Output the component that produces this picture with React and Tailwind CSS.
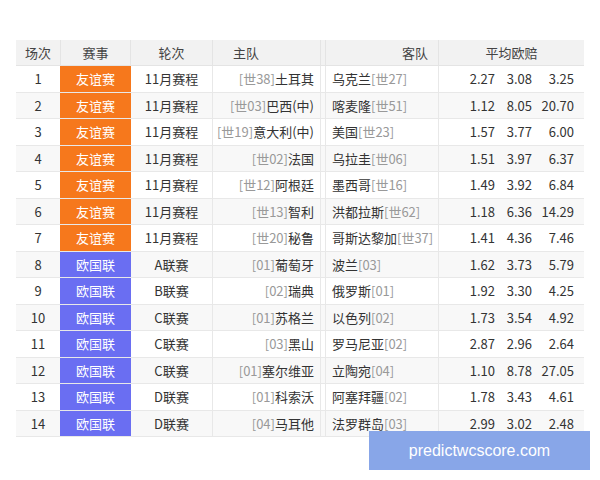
import React from "react";

const rows = [
  [1, "友谊赛", "11月赛程", "[世38]", "土耳其", "", "乌克兰", "[世27]", "2.27", "3.08", "3.25"],
  [2, "友谊赛", "11月赛程", "[世03]", "巴西", "(中)", "喀麦隆", "[世51]", "1.12", "8.05", "20.70"],
  [3, "友谊赛", "11月赛程", "[世19]", "意大利", "(中)", "美国", "[世23]", "1.57", "3.77", "6.00"],
  [4, "友谊赛", "11月赛程", "[世02]", "法国", "", "乌拉圭", "[世06]", "1.51", "3.97", "6.37"],
  [5, "友谊赛", "11月赛程", "[世12]", "阿根廷", "", "墨西哥", "[世16]", "1.49", "3.92", "6.84"],
  [6, "友谊赛", "11月赛程", "[世13]", "智利", "", "洪都拉斯", "[世62]", "1.18", "6.36", "14.29"],
  [7, "友谊赛", "11月赛程", "[世20]", "秘鲁", "", "哥斯达黎加", "[世37]", "1.41", "4.36", "7.46"],
  [8, "欧国联", "A联赛", "[01]", "葡萄牙", "", "波兰", "[03]", "1.62", "3.73", "5.79"],
  [9, "欧国联", "B联赛", "[02]", "瑞典", "", "俄罗斯", "[01]", "1.92", "3.30", "4.25"],
  [10, "欧国联", "C联赛", "[01]", "苏格兰", "", "以色列", "[02]", "1.73", "3.54", "4.92"],
  [11, "欧国联", "C联赛", "[03]", "黑山", "", "罗马尼亚", "[02]", "2.87", "2.96", "2.64"],
  [12, "欧国联", "C联赛", "[01]", "塞尔维亚", "", "立陶宛", "[04]", "1.10", "8.78", "27.05"],
  [13, "欧国联", "D联赛", "[01]", "科索沃", "", "阿塞拜疆", "[02]", "1.78", "3.43", "4.61"],
  [14, "欧国联", "D联赛", "[04]", "马耳他", "", "法罗群岛", "[03]", "2.99", "3.02", "2.48"],
];

export default function App() {
  return (
    <div
      className="w-[600px] h-[480px] bg-white relative pt-[40px] pl-[16px] text-[13px] text-[#333]"
      style={{ fontFamily: '"Microsoft YaHei", "Noto Sans CJK SC", sans-serif' }}
    >
      <div className="w-[568px] flex flex-col">
        <div className="flex h-[26px] items-center bg-[#f2f2f2] text-[#444] border-b border-[#e4e4e4]">
          <div className="w-[44px] text-center">场次</div>
          <div className="w-[71px] text-center h-full flex items-center justify-center border-x border-[#e4e4e4]">赛事</div>
          <div className="w-[81px] text-center">轮次</div>
          <div className="w-[108px] h-full flex items-center pl-[20px] border-l border-[#e4e4e4]">主队</div>
          <div className="w-[6px] h-full border-x border-[#e4e4e4]" />
          <div className="w-[112px] text-right pr-[10px]">客队</div>
          <div className="w-[146px] h-full flex items-center justify-center border-l border-[#e4e4e4]">平均欧赔</div>
        </div>
        {rows.map((r, i) => (
          <div
            key={r[0]}
            className={
              "flex h-[26.5px] items-center border-b border-[#e8e8e8] " +
              (i % 2 ? "bg-[#f8f8f8]" : "bg-white")
            }
          >
            <div className="w-[44px] text-center">{r[0]}</div>
            <div
              className={
                "w-[71px] h-full flex items-center justify-center text-white " +
                (r[0] <= 7 ? "bg-[#f6781c]" : "bg-[#6a6ef2]")
              }
            >
              {r[1]}
            </div>
            <div className="w-[81px] text-center">{r[2]}</div>
            <div className="w-[108px] h-full flex items-center justify-end pr-[6px] border-l border-[#e8e8e8] whitespace-nowrap">
              <span className="text-[#999]">{r[3]}</span>
              {r[4]}
              {r[5]}
            </div>
            <div className="w-[6px] h-full border-x border-[#e8e8e8]" />
            <div className="w-[112px] pl-[6px] whitespace-nowrap">
              {r[6]}
              <span className="text-[#999]">{r[7]}</span>
            </div>
            <div className="w-[146px] h-full flex items-center border-l border-[#e8e8e8]">
              <span className="w-[56px] text-right">{r[8]}</span>
              <span className="w-[37px] text-right">{r[9]}</span>
              <span className="w-[42px] text-right">{r[10]}</span>
            </div>
          </div>
        ))}
      </div>
      <div
        className="absolute left-[369px] top-[431px] w-[221px] h-[39px] bg-[#88a6e8] text-white text-[16px] flex items-center justify-center"
        style={{ fontFamily: "Arial, 'Liberation Sans', sans-serif" }}
      >
        predictwcscore.com
      </div>
    </div>
  );
}
